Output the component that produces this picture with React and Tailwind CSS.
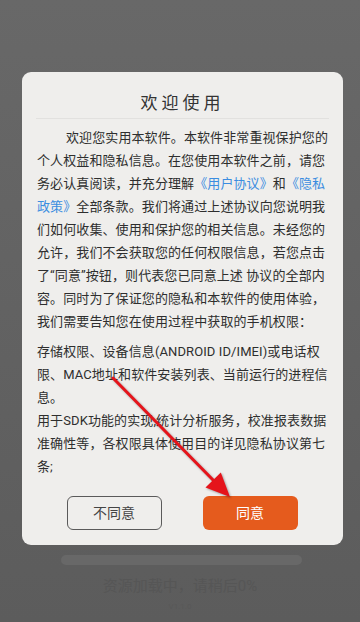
import React from "react";

const Link = ({ children }) => <span className="text-[#3b8de0]">{children}</span>;

export default function App() {
  return (
    <div className="relative flex h-[622px] w-[360px] flex-col items-center overflow-hidden bg-gradient-to-b from-[#686868] to-[#5c5c5c] font-['Roboto','Noto_Sans_CJK_SC',sans-serif]">
      {/* dialog */}
      <div className="ml-[5px] mt-[72px] w-[321px] rounded-[9px] bg-[#efeeec] pb-[15px]">
        <div className="mx-[14px] border-b border-[#e2e1df] pb-[5px] pt-[21px] text-center text-[17px] leading-[20px] tracking-[4px] text-[#333]">
          欢迎使用
        </div>

        <div className="mt-[7px] w-[306px] pl-[15px] text-[13px] leading-[23px] tracking-[0.1px] text-[#2e2e2e]">
          <p className="indent-[29px]">
            欢迎您实用本软件。本软件非常重视保护您的个人权益和隐私信息。在您使用本软件之前，请您务必认真阅读，并充分理解
            <Link>《用户协议》</Link>和<Link>《隐私政策》</Link>
            全部条款。我们将通过上述协议向您说明我们如何收集、使用和保护您的相关信息。未经您的允许，我们不会获取您的任何权限信息，若您点击了“同意”按钮，则代表您已同意上述 协议的全部内容。同时为了保证您的隐私和本软件的使用体验，我们需要告知您在使用过程中获取的手机权限：
          </p>
          <p className="mt-[7px]">
            存储权限、设备信息(ANDROID ID/IMEI)或电话权限、MAC地址和软件安装列表、当前运行的进程信息。
          </p>
          <p>
            用于SDK功能的实现,统计分析服务，校准报表数据准确性等，各权限具体使用目的详见隐私协议第七条;
          </p>
        </div>

        <div className="mt-[18px] flex justify-center gap-[41px] pr-[1px]">
          <button className="h-[34px] w-[95px] rounded-[6px] border border-[#5a5a5a] text-[14px] text-[#444]">
            不同意
          </button>
          <button className="h-[34px] w-[95px] rounded-[6px] bg-[#e55b1d] text-[14px] text-white">
            同意
          </button>
        </div>
      </div>

      {/* loading */}
      <div className="ml-[3px] mt-[10px] h-[10px] w-[241px] rounded-full bg-[#686868]" />
      <div className="mt-[11px] text-[15px] leading-[20px] text-[#565656]">资源加载中，请稍后0%</div>
      <div className="mt-[6px] text-[8px] leading-[10px] text-[#585858]">V1.1.0</div>

      {/* red arrow annotation */}
      <svg className="pointer-events-none absolute left-0 top-0" width="360" height="622">
        <g style={{ filter: "drop-shadow(1px 1px 1px rgba(0,0,0,0.35))" }}>
          <line x1="113" y1="378" x2="215" y2="482" stroke="#e5141b" strokeWidth="3" strokeLinecap="round" />
          <polygon points="230,497 205.5,487.5 220.8,472.5" fill="#e5141b" />
        </g>
      </svg>
    </div>
  );
}
